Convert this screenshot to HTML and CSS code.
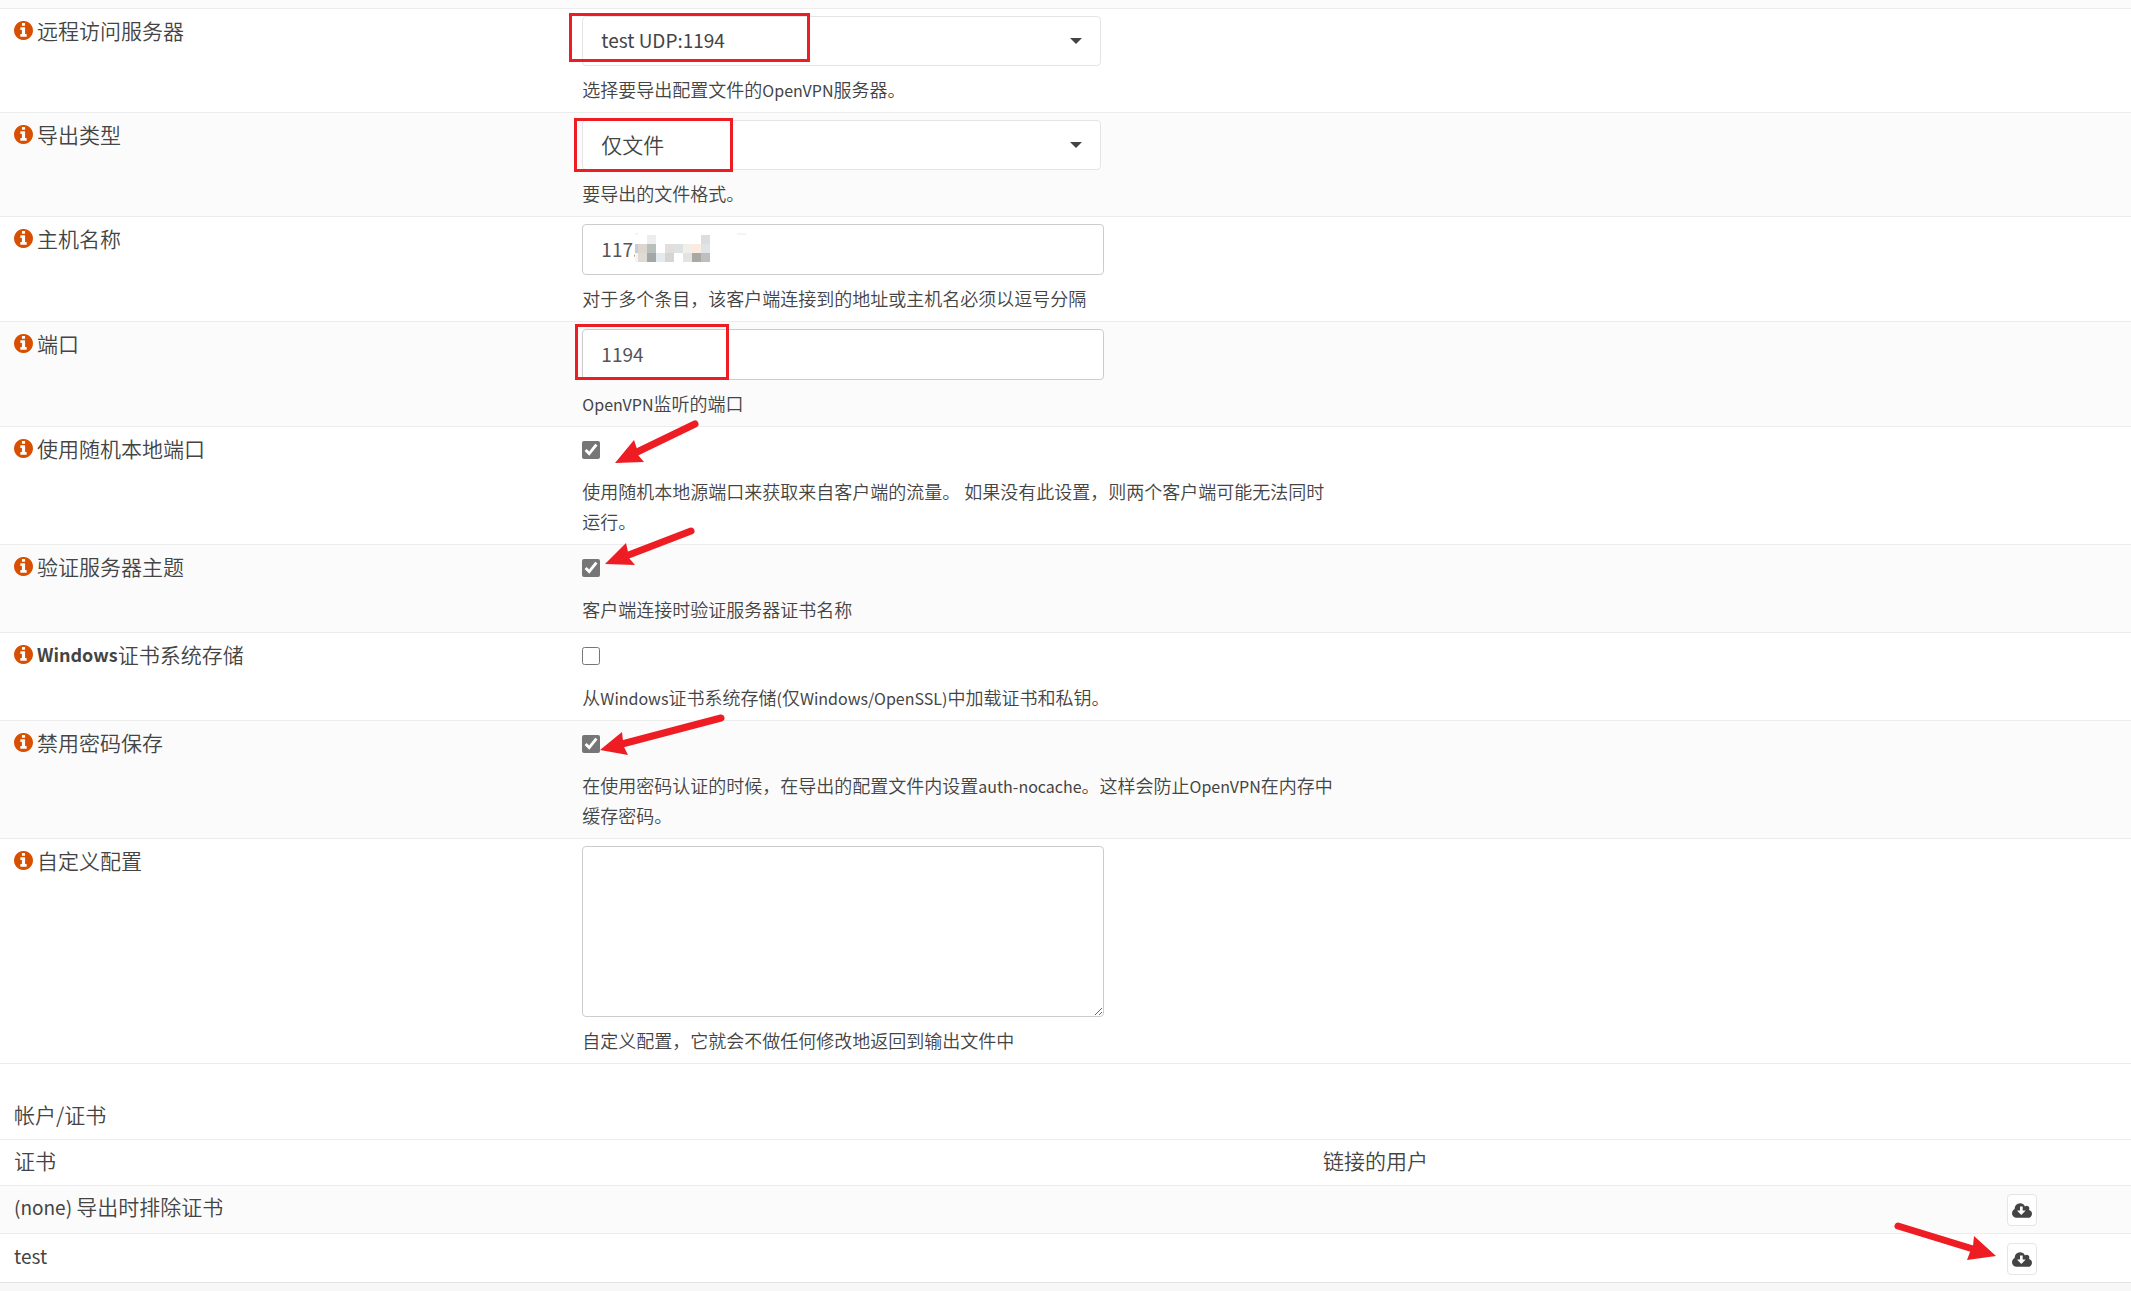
FILE: index.html
```html
<!DOCTYPE html>
<html lang="zh-CN">
<head>
<meta charset="utf-8">
<title>OpenVPN: 客户端导出</title>
<link rel="stylesheet" href="styles.css">
</head>
<body>
<svg class="symbols" aria-hidden="true">
  <symbol id="info" viewBox="128 128 1536 1536">
    <path fill="#d94f00" d="M1152 1376v-160q0-14-9-23t-23-9h-96v-512q0-14-9-23t-23-9h-320q-14 0-23 9t-9 23v160q0 14 9 23t23 9h96v320h-96q-14 0-23 9t-9 23v160q0 14 9 23t23 9h448q14 0 23-9t9-23zm-128-896v-160q0-14-9-23t-23-9h-192q-14 0-23 9t-9 23v160q0 14 9 23t23 9h192q14 0 23-9t9-23zm640 416q0 209-103 385.500t-279.500 279.500-385.500 103-385.500-103-279.500-279.500-103-385.500 103-385.500 279.500-279.500 385.500-103 385.500 103 279.500 279.500 103 385.500z"/>
  </symbol>
  <symbol id="cloud" viewBox="-64 128 1920 1408">
    <path fill="#444" d="M1216 864q0-14-9-23t-23-9h-224v-352q0-13-9.500-22.500t-22.500-9.500h-192q-13 0-22.500 9.500t-9.500 22.500v352h-224q-13 0-22.500 9.500t-9.500 22.500q0 14 9 23l352 352q9 9 23 9t23-9l351-351q10-12 10-24zm640 288q0 159-112.500 271.500t-271.500 112.500h-1088q-185 0-316.500-131.500t-131.500-316.500q0-130 70-240t188-165q-2-30-2-43 0-212 150-362t362-150q156 0 285.500 87t188.500 231q71-62 166-62 106 0 181 75t75 181q0 76-41 138 130 31 213.500 135.500t83.500 238.500z"/>
  </symbol>
</svg>
<main class="page">
  <form class="export">
    <div class="row">
      <label class="name" for="server"><svg class="info"><use href="#info"/></svg>远程访问服务器</label>
      <div class="field">
        <div class="picker">
          <select id="server" class="control select"><option>test UDP:1194</option></select>
          <svg class="caret" viewBox="0 0 12 6"><path d="M0 0h12L6 6z"/></svg>
        </div>
        <p class="help">选择要导出配置文件的<span class="latin">OpenVPN</span>服务器。</p>
        <span class="mark mark-server"></span>
      </div>
    </div>
    <div class="row">
      <label class="name" for="type"><svg class="info"><use href="#info"/></svg>导出类型</label>
      <div class="field">
        <div class="picker">
          <select id="type" class="control select cjk"><option>仅文件</option></select>
          <svg class="caret" viewBox="0 0 12 6"><path d="M0 0h12L6 6z"/></svg>
        </div>
        <p class="help">要导出的文件格式。</p>
        <span class="mark mark-type"></span>
      </div>
    </div>
    <div class="row">
      <label class="name" for="host"><svg class="info"><use href="#info"/></svg>主机名称</label>
      <div class="field">
        <input id="host" class="control" type="text" value="117.">
        <svg class="mosaic" viewBox="0 0 111 30" shape-rendering="crispEdges">
          <path fill="#fff" d="M0 0h57v30H0z"/>
          <path fill="#f4f4f4" d="M0 0h3v2H0zM102 0h9v2h-9zM0 20h3v9H0z"/>
          <path fill="#eceeed" d="M12 2h9v9h-9z"/><path fill="#dcdddd" d="M66 2h9v9h-9z"/>
          <path fill="#c3ced8" d="M0 11h3v9H0z"/><path fill="#ddd5cf" d="M3 11h9v9H3z"/>
          <path fill="#b9bfbd" d="M12 11h9v9h-9z"/><path fill="#e2dedb" d="M30 11h9v9h-9z"/>
          <path fill="#dde1df" d="M39 11h9v9h-9z"/><path fill="#f2efeb" d="M48 11h9v9h-9z"/>
          <path fill="#fbecdf" d="M57 11h9v9h-9z"/><path fill="#dfe4e8" d="M66 11h9v9h-9z"/>
          <path fill="#e0dad6" d="M3 20h9v9H3z"/><path fill="#a3a7a8" d="M12 20h9v9h-9z"/>
          <path fill="#e5eaee" d="M21 20h9v9h-9z"/><path fill="#d5d5d3" d="M30 20h9v9h-9z"/>
          <path fill="#e0e4e2" d="M48 20h9v9h-9z"/><path fill="#a8a8a5" d="M57 20h9v9h-9z"/>
          <path fill="#bcbfbe" d="M66 20h9v9h-9z"/>
        </svg>
        <p class="help">对于多个条目，该客户端连接到的地址或主机名必须以逗号分隔</p>
      </div>
    </div>
    <div class="row">
      <label class="name" for="port"><svg class="info"><use href="#info"/></svg>端口</label>
      <div class="field">
        <input id="port" class="control" type="text" value="1194">
        <p class="help"><span class="latin">OpenVPN</span>监听的端口</p>
        <span class="mark mark-port"></span>
      </div>
    </div>
    <div class="row">
      <label class="name" for="random"><svg class="info"><use href="#info"/></svg>使用随机本地端口</label>
      <div class="field">
        <input id="random" class="tick" type="checkbox" checked>
        <p class="help">使用随机本地源端口来获取来自客户端的流量。 如果没有此设置，则两个客户端可能无法同时运行。</p>
        <svg class="arrow"><path d="M33 29 52 6 55 15 56 21 62 28z"/><path class="shaft" d="M53 19 113-10"/></svg>
      </div>
    </div>
    <div class="row">
      <label class="name" for="verify"><svg class="info"><use href="#info"/></svg>验证服务器主题</label>
      <div class="field">
        <input id="verify" class="tick" type="checkbox" checked>
        <p class="help">客户端连接时验证服务器证书名称</p>
        <svg class="arrow"><path d="M23 12 44-9 46 0 47 6 53 13z"/><path class="shaft" d="M44 4 109-21"/></svg>
      </div>
    </div>
    <div class="row">
      <label class="name" for="store"><svg class="info"><use href="#info"/></svg><b>Windows</b>证书系统存储</label>
      <div class="field">
        <input id="store" class="tick" type="checkbox">
        <p class="help">从<span class="latin">Windows</span>证书系统存储<span class="latin">(</span>仅<span class="latin">Windows/OpenSSL)</span>中加载证书和私钥。</p>
      </div>
    </div>
    <div class="row">
      <label class="name" for="nosave"><svg class="info"><use href="#info"/></svg>禁用密码保存</label>
      <div class="field">
        <input id="nosave" class="tick" type="checkbox" checked>
        <p class="help">在使用密码认证的时候，在导出的配置文件内设置<span class="latin">auth-nocache</span>。这样会防止<span class="latin">OpenVPN</span>在内存中缓存密码。</p>
        <svg class="arrow"><path d="M18 22 40 4 41 13 42 19 46 27z"/><path class="shaft" d="M40 16 139-10"/></svg>
      </div>
    </div>
    <div class="row">
      <label class="name" for="custom"><svg class="info"><use href="#info"/></svg>自定义配置</label>
      <div class="field">
        <textarea id="custom" class="control area"></textarea>
        <p class="help">自定义配置，它就会不做任何修改地返回到输出文件中</p>
      </div>
    </div>
  </form>
  <h2 class="title">帐户/证书</h2>
  <table class="certs">
    <thead>
      <tr><th>证书</th><th class="users">链接的用户</th><th class="actions"></th></tr>
    </thead>
    <tbody>
      <tr>
        <td><span class="latin-lg">(none) </span>导出时排除证书</td><td></td>
        <td><button class="download" type="button" aria-label="下载"><svg class="cloud"><use href="#cloud"/></svg></button></td>
      </tr>
      <tr>
        <td><span class="latin-lg">test</span></td><td></td>
        <td><button class="download" type="button" aria-label="下载"><svg class="cloud"><use href="#cloud"/></svg><svg class="arrow"><path d="M-12 12-34-8-35 2-38 8-41 16z"/><path class="shaft" d="M-35 5-110-18"/></svg></button></td>
      </tr>
    </tbody>
  </table>
</main>
</body>
</html>
```
FILE: styles.css
```css
* { box-sizing: border-box; }
body {
  margin: 0;
  background: #f7f7f7;
  color: #444;
  font: 350 21px/30px "Noto Sans CJK SC", sans-serif;
}
.symbols { display: none; }
.page {
  background: #fff;
  border-bottom: 1px solid #e2e2e2;
}
.export {
  padding-top: 8px;
  background: #fbfbfb;
  border-bottom: 1px solid #ececec;
}
.row {
  display: grid;
  grid-template-columns: 27% 1fr;
  padding: 7px 0 8px;
  border-top: 1px solid #ececec;
  background: #fbfbfb;
}
.row:nth-child(odd) { background: #fff; }
.name {
  display: flex;
  align-items: center;
  align-self: start;
  padding-left: 14px;
  line-height: 28px;
}
.name b {
  font-size: 18px;
  font-weight: 700;
}
.latin,
.latin-lg {
  font-weight: 400;
  line-height: 1;
}
.latin { font-size: 16px; }
.latin-lg { font-size: 19px; }
.info {
  width: 19px;
  height: 19px;
  margin-right: 4px;
}
.field {
  position: relative;
  margin-left: 7px;
}
.control {
  display: block;
  width: 522px;
  max-width: 100%;
  height: 51px;
  padding: 0 18px 2px;
  border: 1px solid #ccc;
  border-radius: 4px;
  background: #fff;
  color: #555;
  font: inherit;
  font-size: 19px;
  font-weight: 400;
}
.picker {
  position: relative;
  width: 519px;
  max-width: 100%;
}
.select {
  width: 100%;
  height: 50px;
  border-color: #e5e5e5;
  color: #444;
  appearance: none;
}
.cjk {
  font-size: 21px;
  font-weight: 350;
}
.caret {
  position: absolute;
  right: 19px;
  top: 22px;
  width: 12px;
  height: 6px;
  fill: #444;
}
.area {
  height: 171px;
  resize: both;
}
.tick {
  display: block;
  width: 18px;
  height: 18px;
  margin: 7px 0 17px;
  accent-color: #767676;
}
.help {
  max-width: 756px;
  margin: 8px 0 0;
  font-size: 18px;
}
.mark {
  position: absolute;
  border: 3px solid #ee1c23;
}
.mark-server { left: -13px; top: -3px; width: 241px; height: 49px; }
.mark-type { left: -8px; top: -2px; width: 159px; height: 54px; }
.mark-port { left: -7px; top: -5px; width: 154px; height: 56px; }
.mosaic {
  position: absolute;
  left: 53px;
  top: 9px;
  width: 111px;
  height: 30px;
}
.arrow {
  position: absolute;
  left: 0;
  top: 0;
  width: 1px;
  height: 1px;
  overflow: visible;
  fill: #ee1c23;
}
.shaft {
  fill: none;
  stroke: #ee1c23;
  stroke-width: 7px;
  stroke-linecap: round;
}
.title {
  margin: 0;
  padding: 35px 14px 10px;
  font: inherit;
}
.certs {
  width: 100%;
  border-collapse: separate;
  border-spacing: 0;
  table-layout: fixed;
}
.certs th,
.certs td {
  padding: 5px 7px 7px;
  border-top: 1px solid #ececec;
  text-align: left;
  vertical-align: top;
  font-weight: inherit;
}
.certs th { padding-bottom: 10px; }
.certs th:first-child,
.certs td:first-child { padding-left: 14px; }
.certs tbody tr:first-child { background: #fbfbfb; }
.certs tbody tr:last-child td { padding-top: 6px; }
.users { width: 684px; }
.actions { width: 131px; }
.download {
  display: flex;
  align-items: center;
  justify-content: center;
  position: relative;
  width: 30px;
  height: 32px;
  margin-top: 3px;
  padding: 0;
  border: 1px solid #e5e5e5;
  border-radius: 4px;
  background: #fff;
}
.cloud {
  width: 20px;
  height: 15px;
}
```
